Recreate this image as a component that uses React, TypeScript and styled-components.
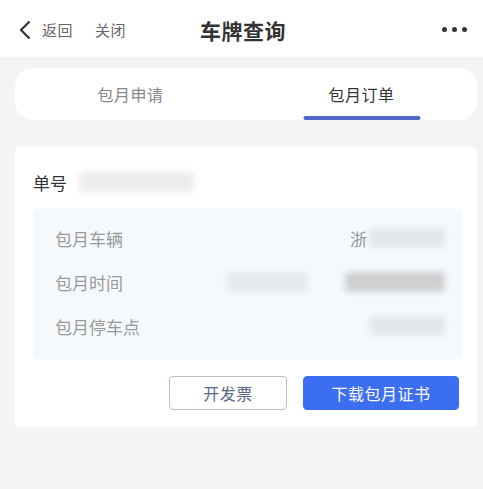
import React from "react";
import styled, { createGlobalStyle } from "styled-components";

const Global = createGlobalStyle`
  html, body { margin: 0; padding: 0; background: #f4f4f4; }
  body { font-family: "Noto Sans CJK SC", "Noto Sans", sans-serif; }
  * { box-sizing: border-box; }
`;

const Page = styled.div`
  width: 483px;
  height: 489px;
  background: #f4f4f4;
  overflow: hidden;
`;

const Header = styled.header`
  height: 57px;
  background: #fff;
  display: grid;
  grid-template-columns: 1fr auto 1fr;
  align-items: center;
  padding: 2px 14px 0 17px;
`;

const NavLeft = styled.div`
  display: flex;
  align-items: center;
`;

const NavLink = styled.span<{ $ml?: number }>`
  font-size: 15px;
  color: #666;
  margin-left: ${(p) => p.$ml ?? 0}px;
  letter-spacing: 0.5px;
`;

const Title = styled.h1`
  margin: 0;
  font-size: 21px;
  font-weight: 600;
  color: #333;
  letter-spacing: 0.5px;
`;

const More = styled.div`
  justify-self: end;
  display: flex;
  gap: 5px;
  padding-right: 2px;
  span {
    width: 5px;
    height: 5px;
    border-radius: 50%;
    background: #333;
  }
`;

const TabCard = styled.nav`
  margin: 11px 6px 0 15px;
  height: 52px;
  background: #fff;
  border-radius: 18px;
  display: grid;
  grid-template-columns: 1fr 1fr;
`;

const Tab = styled.div<{ $active?: boolean }>`
  position: relative;
  display: flex;
  align-items: center;
  justify-content: center;
  font-size: 16px;
  letter-spacing: 0.5px;
  color: ${(p) => (p.$active ? "#333" : "#888")};
  &::after {
    content: "";
    display: ${(p) => (p.$active ? "block" : "none")};
    position: absolute;
    bottom: 0;
    left: 50%;
    transform: translateX(-50%);
    width: 117px;
    height: 4px;
    border-radius: 2px;
    background: #5067c9;
  }
`;

const Card = styled.section`
  margin: 27px 6px 0 15px;
  background: #fff;
  border-radius: 4px;
  padding: 23px 15px 17px 18px;
`;

const OrderLine = styled.div`
  display: flex;
  align-items: center;
  gap: 12px;
  font-size: 17px;
  color: #333;
  height: 24px;
`;

const Blur = styled.span<{ $w: number; $tone?: number }>`
  display: inline-block;
  width: ${(p) => p.$w}px;
  height: 20px;
  border-radius: 4px;
  background: ${(p) => `rgba(150,150,150,${p.$tone ?? 0.3})`};
  filter: blur(3px);
`;

const InfoBox = styled.div`
  margin-top: 14px;
  background: #f6f9fc;
  border-radius: 6px;
  padding: 8px 17px 12px 22px;
`;

const InfoRow = styled.div`
  height: 44px;
  display: flex;
  align-items: center;
  justify-content: space-between;
  font-size: 17px;
  color: #999;
`;

const Value = styled.div`
  display: flex;
  align-items: center;
  gap: 2px;
  color: #999;
`;

const Spacer = styled.span<{ $w: number }>`
  width: ${(p) => p.$w}px;
`;

const Actions = styled.div`
  margin-top: 16px;
  display: flex;
  justify-content: flex-end;
  gap: 16px;
  padding-right: 3px;
`;

const Button = styled.button<{ $primary?: boolean }>`
  height: 34px;
  width: ${(p) => (p.$primary ? 156 : 118)}px;
  border-radius: 4px;
  font-family: inherit;
  font-size: 16px;
  letter-spacing: 0.5px;
  border: 1px solid ${(p) => (p.$primary ? "#3b6ef1" : "#b8bfcc")};
  background: ${(p) => (p.$primary ? "#3b6ef1" : "#fff")};
  color: ${(p) => (p.$primary ? "#fff" : "#5a6788")};
`;

const Chevron = () => (
  <svg width="16" height="20" viewBox="0 0 16 20">
    <path d="M12.5 1.5 L4 10 L12.5 18.5" fill="none" stroke="#333" strokeWidth="2.2" />
  </svg>
);

export default function App() {
  return (
    <Page>
      <Global />
      <Header>
        <NavLeft>
          <Chevron />
          <NavLink $ml={9}>返回</NavLink>
          <NavLink $ml={22}>关闭</NavLink>
        </NavLeft>
        <Title>车牌查询</Title>
        <More>
          <span />
          <span />
          <span />
        </More>
      </Header>
      <TabCard>
        <Tab>包月申请</Tab>
        <Tab $active>包月订单</Tab>
      </TabCard>
      <Card>
        <OrderLine>
          单号
          <Blur $w={115} $tone={0.18} />
        </OrderLine>
        <InfoBox>
          <InfoRow>
            包月车辆
            <Value>
              浙<Blur $w={76} $tone={0.18} />
            </Value>
          </InfoRow>
          <InfoRow>
            包月时间
            <Value>
              <Blur $w={80} $tone={0.16} />
              <Spacer $w={34} />
              <Blur $w={100} $tone={0.42} />
            </Value>
          </InfoRow>
          <InfoRow>
            包月停车点
            <Value>
              <Blur $w={75} $tone={0.18} />
            </Value>
          </InfoRow>
        </InfoBox>
        <Actions>
          <Button>开发票</Button>
          <Button $primary>下载包月证书</Button>
        </Actions>
      </Card>
    </Page>
  );
}
